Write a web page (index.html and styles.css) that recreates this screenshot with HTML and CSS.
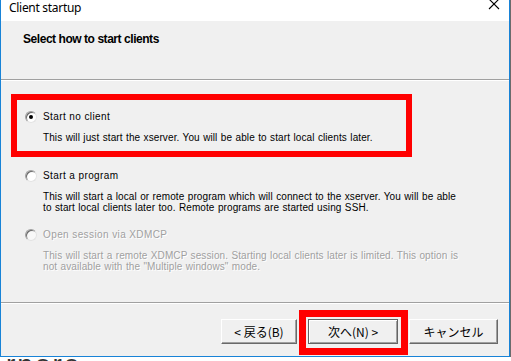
FILE: index.html
```html
<!DOCTYPE html>
<html><head><meta charset="UTF-8">
    <meta name="viewport" content="width=device-width, initial-scale=1.0">
    <title>Client startup</title>
    <link rel="stylesheet" href="styles.css">
</head>
<body>
    <div class="window">
        <div class="titlebar">
            <span class="title">Client startup</span>
            <svg class="close" width="12" height="11" viewBox="0 0 12 11"><path d="M1 0 L11 10 M11 0 L1 10" stroke="#000" stroke-width="1.1" fill="none"/></svg>
        </div>
        <div class="head">
            <h1>Select how to start clients</h1>
        </div>
        <div class="sep"></div>

        <div class="content">
            <div class="option">
                <div class="opt-row"><span class="radio checked"></span><span class="opt-label">Start no client</span></div>
                <p class="opt-desc">This will just start the xserver. You will be able to start local clients later.</p>
            </div>
            <div class="option">
                <div class="opt-row"><span class="radio"></span><span class="opt-label">Start a program</span></div>
                <p class="opt-desc">This will start a local or remote program which will connect to the xserver. You will be able<br>to start local clients later too. Remote programs are started using SSH.</p>
            </div>
            <div class="option disabled">
                <div class="opt-row"><span class="radio"></span><span class="opt-label">Open session via XDMCP</span></div>
                <p class="opt-desc">This will start a remote XDMCP session. Starting local clients later is limited. This option is<br>not available with the "Multiple windows" mode.</p>
            </div>
            <!-- 注釈の赤枠 -->
            <div class="mark mark-option"></div>
        </div>

        <div class="sep"></div>
        <div class="buttons">
            <button class="btn btn-back">&lt; 戻る(B)</button>
            <button class="btn btn-next">次へ(N) &gt;</button>
            <button class="btn btn-cancel">キャンセル</button>
            <div class="mark mark-next"></div>
        </div>
    </div>
    <div class="behind">rnore.</div>
</body></html>
```

FILE: styles.css
```css
* {
    margin: 0;
    padding: 0;
    box-sizing: border-box;
}

body {
    background: #ffffff;
    width: 511px;
    height: 361px;
    overflow: hidden;
    font-family: 'Liberation Sans', Arial, sans-serif;
    color: #000;
}

.window {
    width: 510px;
    height: 357px;
    background: #f0f0f0;
    border-left: 1px solid #1883d7;
    border-right: 1px solid #1883d7;
    border-bottom: 1px solid #1883d7;
    box-shadow: 1px 0 0 #6b6b6b;
    display: flex;
    flex-direction: column;
    position: relative;
}

/* タイトルバー */
.titlebar {
    height: 21px;
    background: #fff;
    display: flex;
    justify-content: space-between;
    padding: 0 9px 0 8px;
}

.title {
    font-family: 'Noto Sans', 'Liberation Sans', sans-serif;
    font-size: 12px;
    line-height: 15px;
    letter-spacing: -0.3px;
}

.close {
    margin-top: -1px;
}

.head {
    height: 58px;
    padding: 10px 0 0 22px;
}

.head h1 {
    font-family: 'Liberation Sans', Arial, sans-serif;
    font-size: 12px;
    font-weight: bold;
    line-height: 16px;
    letter-spacing: -0.45px;
}

.sep {
    height: 2px;
    border-top: 1px solid #a0a0a0;
    border-bottom: 1px solid #fff;
}

.content {
    flex: 1;
    padding: 30px 0 0 24px;
    position: relative;
}

.option {
    margin-bottom: 16px;
}

.opt-row {
    display: flex;
    align-items: center;
    height: 12px;
}

.radio {
    width: 12px;
    height: 12px;
    border-radius: 50%;
    background: #fff;
    border: 1px solid;
    border-color: #a0a0a0 #e3e3e3 #e3e3e3 #a0a0a0;
    box-shadow: inset 1px 1px 0 #696969;
    margin-right: 6px;
    display: flex;
    align-items: center;
    justify-content: center;
}

.radio.checked::after {
    content: "";
    width: 4px;
    height: 4px;
    border-radius: 50%;
    background: #000;
}

.opt-label,
.opt-desc {
    font-size: 10px;
}

.opt-label {
    line-height: 12px;
    letter-spacing: 0.4px;
}

.opt-desc {
    margin: 9px 0 0 18px;
    line-height: 11px;
    min-height: 22px;
    letter-spacing: 0.1px;
    word-spacing: 0.5px;
}

.disabled .opt-label,
.disabled .opt-desc {
    color: #a0a0a0;
    text-shadow: 1px 1px 0 #fff;
}

.disabled .radio {
    background: #f8f8f8;
}

/* ボタン */
.buttons {
    height: 52px;
    display: flex;
    justify-content: flex-end;
    align-items: flex-start;
    padding: 15px 11px 0 0;
    position: relative;
}

.btn {
    height: 25px;
    background: #f0f0f0;
    font-family: 'Noto Sans CJK JP', 'Liberation Sans', sans-serif;
    font-size: 12px;
    border: 1px solid;
    border-color: #fff #696969 #696969 #fff;
    box-shadow: inset -1px -1px 0 #a0a0a0;
    color: #000;
}

.btn-back {
    width: 76px;
    margin-right: 11px;
}

.btn-next {
    width: 90px;
    margin-right: 11px;
    border: 1px solid #646464;
    box-shadow: inset 1px 1px 0 #fff, inset -1px -1px 0 #a0a0a0;
}

.btn-cancel {
    width: 89px;
}

/* 赤い注釈枠 */
.mark {
    position: absolute;
    border: 6px solid #ff0000;
}

.mark-option {
    left: 10px;
    top: 13px;
    width: 401px;
    height: 63px;
}

.mark-next {
    left: 298px;
    top: 6px;
    width: 109px;
    height: 45px;
    border-width: 7px;
}

.behind {
    font-family: 'Liberation Sans', Arial, sans-serif;
    font-size: 28px;
    line-height: 10px;
    padding: 3px 0 0 6px;
    color: #333;
    letter-spacing: 2px;
}
```
